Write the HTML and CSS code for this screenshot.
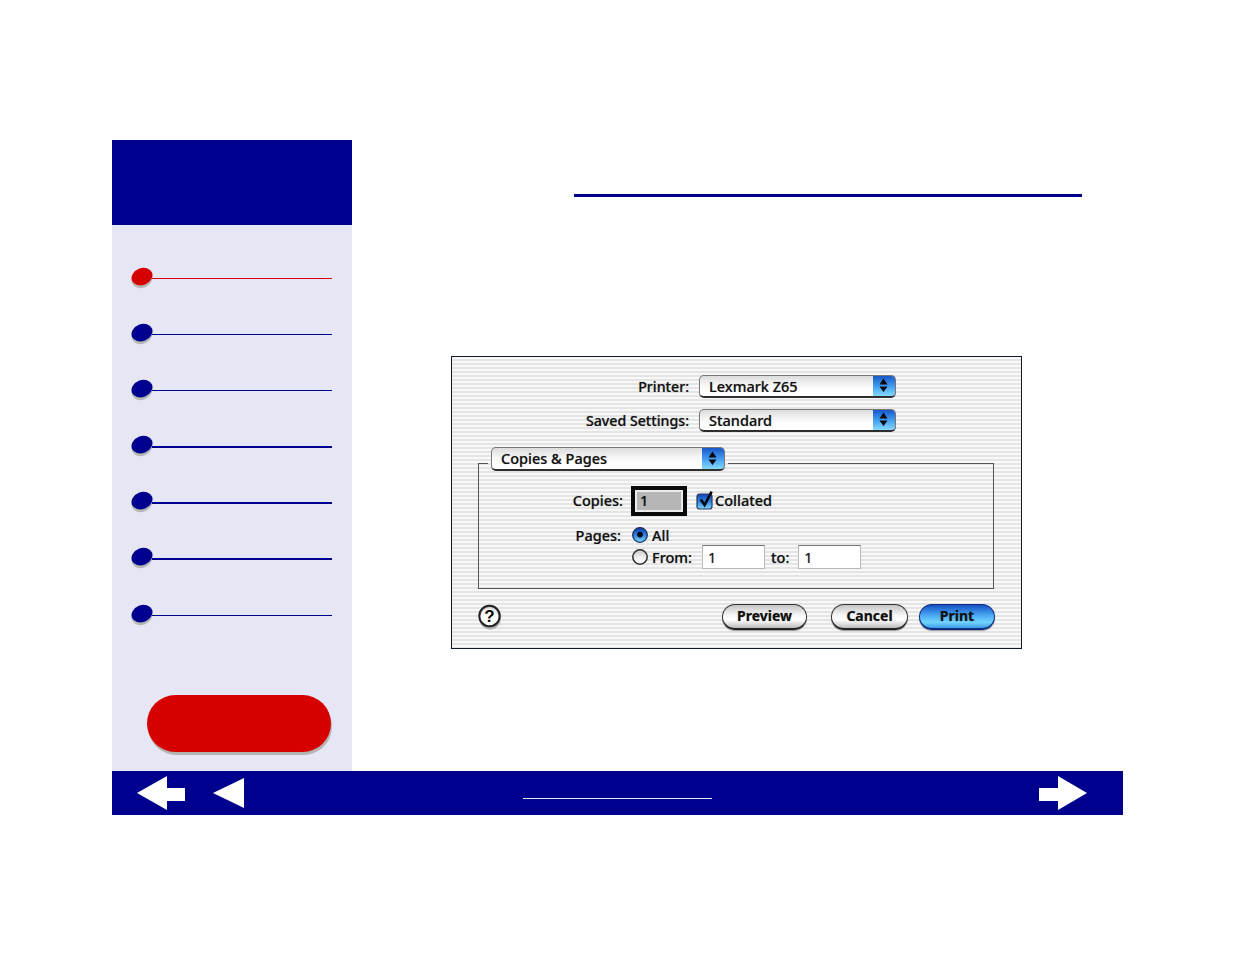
FILE: index.html
```html
<!DOCTYPE html>
<html lang="en">
<head>
<meta charset="utf-8">
<title>Print dialog</title>
<link rel="stylesheet" href="styles.css">
</head>
<body>
<svg class="defs" width="0" height="0" aria-hidden="true">
  <defs>
    <symbol id="bullet" viewBox="0 0 22 24">
      <ellipse cx="11" cy="12.4" rx="10.6" ry="8.4" transform="rotate(-22 11 12.4)" fill="#b8b8b8"/>
      <ellipse cx="11" cy="9.6" rx="10.8" ry="8.4" transform="rotate(-22 11 9.6)" fill="currentColor"/>
    </symbol>
    <symbol id="updown" viewBox="0 0 23 23">
      <path d="M11.5 4.5 15.5 10.5H7.5zM11.5 18 15.5 12.5H7.5z" fill="#06060e"/>
    </symbol>
  </defs>
</svg>
<div class="page">
  <div class="main">
    <aside class="sidebar">
      <div class="side-head"></div>
      <nav class="nav">
        <div class="nav-item nav-red"><svg class="bullet"><use href="#bullet"/></svg><span class="nav-line"></span></div>
        <div class="nav-item"><svg class="bullet"><use href="#bullet"/></svg><span class="nav-line"></span></div>
        <div class="nav-item"><svg class="bullet"><use href="#bullet"/></svg><span class="nav-line"></span></div>
        <div class="nav-item"><svg class="bullet"><use href="#bullet"/></svg><span class="nav-line thick"></span></div>
        <div class="nav-item"><svg class="bullet"><use href="#bullet"/></svg><span class="nav-line thick"></span></div>
        <div class="nav-item"><svg class="bullet"><use href="#bullet"/></svg><span class="nav-line thick"></span></div>
        <div class="nav-item nav-last"><svg class="bullet"><use href="#bullet"/></svg><span class="nav-line"></span></div>
      </nav>
      <div class="pill"></div>
    </aside>
    <section class="content">
      <div class="title-rule"></div>
      <div class="dialog">
        <div class="form-row">
          <span class="label">Printer:</span>
          <div class="popup popup-wide"><span class="popup-text">Lexmark Z65</span><span class="cap"><svg class="updown"><use href="#updown"/></svg></span></div>
        </div>
        <div class="form-row">
          <span class="label">Saved Settings:</span>
          <div class="popup popup-wide"><span class="popup-text">Standard</span><span class="cap"><svg class="updown"><use href="#updown"/></svg></span></div>
        </div>
        <fieldset class="group">
          <legend class="group-legend">
            <div class="popup popup-group"><span class="popup-text">Copies &amp; Pages</span><span class="cap"><svg class="updown"><use href="#updown"/></svg></span></div>
          </legend>
          <div class="copies-row">
            <span class="group-label copies-label">Copies:</span>
            <div class="copies-field"><span class="copies-value">1</span></div>
            <svg class="check" viewBox="0 0 18 20"><defs><linearGradient id="cg" x1="0" y1="0" x2="0" y2="1"><stop offset="0" stop-color="#1246b4"/><stop offset=".5" stop-color="#2f80e0"/><stop offset="1" stop-color="#7cd6fc"/></linearGradient></defs><rect x="1" y="4" width="15" height="15" rx="2.5" fill="url(#cg)" stroke="#28365c" stroke-width="1.2"/><path d="M4.8 9.6 8.6 15 15.6 1.6" fill="none" stroke="#06060e" stroke-width="2.6"/></svg>
            <span class="text collated">Collated</span>
          </div>
          <div class="pages-block">
            <span class="group-label pages-label">Pages:</span>
            <div class="pages-options">
              <div class="option option-all">
                <svg class="radio" viewBox="0 0 16 16"><defs><linearGradient id="rg" x1="0" y1="0" x2="0" y2="1"><stop offset="0" stop-color="#0c3ca8"/><stop offset=".5" stop-color="#2c80e4"/><stop offset="1" stop-color="#84dcfe"/></linearGradient></defs><circle cx="8" cy="8" r="7.3" fill="url(#rg)" stroke="#1c2c58" stroke-width="1.3"/><circle cx="8" cy="7.6" r="2.8" fill="#06060e"/></svg>
                <span class="text">All</span>
              </div>
              <div class="option">
                <svg class="radio" viewBox="0 0 16 16"><defs><linearGradient id="rw" x1="0" y1="0" x2="0" y2="1"><stop offset="0" stop-color="#c8c8c8"/><stop offset=".6" stop-color="#f4f4f4"/><stop offset="1" stop-color="#ffffff"/></linearGradient></defs><circle cx="8" cy="8" r="7.2" fill="url(#rw)" stroke="#2c2c2c" stroke-width="1.5"/></svg>
                <span class="text from-label">From:</span>
                <div class="num-field">1</div>
                <span class="text to-label">to:</span>
                <div class="num-field">1</div>
              </div>
            </div>
          </div>
        </fieldset>
        <div class="dialog-actions">
          <svg class="help" viewBox="0 0 24 26"><defs><radialGradient id="hg" cx=".5" cy=".6" r=".6"><stop offset="0" stop-color="#fff"/><stop offset=".65" stop-color="#fafafa"/><stop offset="1" stop-color="#bbb"/></radialGradient></defs><ellipse cx="12" cy="14" rx="11" ry="11.4" fill="#aaa"/><circle cx="11.5" cy="12" r="10.2" fill="url(#hg)" stroke="#222" stroke-width="2"/><text x="11.5" y="18" text-anchor="middle" class="help-mark">?</text></svg>
          <div class="btn btn-preview">Preview</div>
          <div class="btn btn-cancel">Cancel</div>
          <div class="btn btn-print">Print</div>
        </div>
      </div>
    </section>
  </div>
  <footer class="footer">
    <svg class="arrow-back" viewBox="0 0 48 34"><path d="M0 17 30 0V12H48V25H30V34z" fill="#fff"/></svg>
    <svg class="arrow-prev" viewBox="0 0 31 30"><path d="M0 15 31 0V30z" fill="#fff"/></svg>
    <span class="foot-link"></span>
    <svg class="arrow-next" viewBox="0 0 48 34"><path d="M48 17 19 0V12H0V25H19V34z" fill="#fff"/></svg>
  </footer>
</div>
</body>
</html>
```
FILE: styles.css
```css
* { box-sizing: border-box; }
html, body { margin: 0; padding: 0; background: #fff; }
body { font-family: "Noto Sans", "Open Sans", sans-serif; color: #111; }
.defs { display: block; height: 0; }
.page { width: 1123px; height: 954px; padding: 140px 0 0 112px; }
.main { display: flex; height: 631px; }

.sidebar { width: 240px; background: #e6e6f4; display: flex; flex-direction: column; }
.side-head { height: 85px; background: #00008e; }
.nav { padding: 42px 0 0 19px; display: flex; flex-direction: column; }
.nav-item { height: 56px; display: flex; align-items: flex-start; color: #00008e; }
.nav-red { color: #d70000; }
.nav-last { margin-top: 1px; }
.bullet { width: 22px; height: 24px; flex: none; }
.nav-line { width: 180px; height: 1px; margin: 11px 0 0 -1px; background: currentColor; }
.nav-line.thick { height: 2px; }
.pill { width: 184px; height: 57px; margin: 35px 0 0 35px; border-radius: 29px; background: #d70000; box-shadow: 1px 3px 0 #b4b4b4; }

.content { flex: 1; }
.title-rule { width: 508px; height: 3px; margin: 54px 0 0 222px; background: #00008e; }
.dialog { width: 571px; height: 293px; margin: 159px 0 0 99px; padding: 18px 26px 0; border: 1px solid #10182c;
  background: repeating-linear-gradient(#f8f8f8 0 2px, #e4e4e4 2px 4px); }

.label, .group-label, .text, .popup-text, .btn, .num-field, .copies-value { font-size: 14.5px; font-weight: 500; line-height: 20px; white-space: nowrap; text-shadow: 0 0 1px rgba(0, 0, 0, .45); }

.form-row { display: flex; align-items: center; height: 23px; margin-bottom: 11px; }
.label { width: 211px; text-align: right; margin-right: 10px; font-size: 14.2px; }
.popup { display: flex; align-items: stretch; height: 23px; border: 1px solid #777; border-bottom: 2px solid #2e2e2e; border-radius: 5px; overflow: hidden;
  background: linear-gradient(#dcdcdc, #f6f6f6 45%, #fff 70%); }
.popup-wide { width: 197px; }
.popup-group { width: 234px; height: 24px; }
.popup-text { flex: 1; padding-left: 9px; }
.cap { width: 23px; margin: -1px -1px -2px 0; padding-right: 1px; background: linear-gradient(#1450c4, #3f98ee 50%, #84dafe); border-radius: 0 5px 5px 0; border-right: 1px solid #123a90; border-bottom: 2px solid #123a70; display: flex; align-items: center; justify-content: center; }
.updown { width: 23px; height: 23px; flex: none; }

.group { width: 516px; height: 142px; margin: 15px 0 0; padding: 0; min-width: 0; border: 1px solid #555; display: block; }
.group-legend { padding: 0 3px 8px; margin: 0 0 0 9px; }

.copies-row { display: flex; align-items: center; height: 30px; margin-top: 7px; }
.group-label { width: 144px; text-align: right; flex: none; }
.copies-label, .collated { padding-bottom: 2px; }
.copies-field { width: 56px; height: 30px; margin-left: 8px; border: 4px solid #0a0a0a; background: #b6b6b6; box-shadow: inset 0 0 0 2px #ececec; padding: 0 0 2px 5px; display: flex; align-items: center; }
.check { width: 18px; height: 20px; margin: -3px 1px 0 9px; flex: none; }

.pages-block { display: flex; margin-top: 9px; }
.pages-label { width: 142px; }
.pages-options { margin-left: 11px; }
.option { display: flex; align-items: center; height: 24px; }
.option-all { height: 20px; }
.radio { width: 16px; height: 16px; flex: none; margin-right: 4px; }
.from-label { width: 50px; }
.to-label { margin: 0 9px 0 6px; }
.num-field { width: 63px; height: 24px; padding-left: 5px; background: #fff; border: 1px solid #b8b8b8; border-top-color: #777; line-height: 22px; font-weight: 400; }

.dialog-actions { display: flex; align-items: flex-start; margin-top: 15px; }
.help { width: 24px; height: 26px; flex: none; }
.help-mark { font: 700 17px "Liberation Sans", sans-serif; fill: #0a0a0a; }
.btn { height: 26px; border-radius: 13px; border: 1.5px solid #333; border-bottom: 2px solid #222; text-align: center; line-height: 22px; font-weight: 700; font-size: 14px;
  background: linear-gradient(#c4c4c4, #f8f8f8 45%, #fff 65%, #bcbcbc); box-shadow: 0 1px 1px #9a9a9a; }
.btn-preview { width: 85px; margin-left: 220px; }
.btn-cancel { width: 77px; margin-left: 24px; }
.btn-print { width: 76px; margin-left: 11px; border-color: #0c2c80; background: linear-gradient(#1450c4, #4aa8f4 45%, #70d4fe 75%, #3f9ae8); }

.footer { width: 1011px; height: 44px; background: #00008e; display: flex; align-items: flex-start; }
.arrow-back { width: 48px; height: 34px; margin: 5px 0 0 25px; flex: none; }
.arrow-prev { width: 31px; height: 30px; margin: 7px 0 0 28px; flex: none; }
.foot-link { width: 189px; height: 1px; margin: 27px 0 0 279px; background: #e8e8ff; flex: none; }
.arrow-next { width: 48px; height: 34px; margin: 5px 0 0 327px; flex: none; }
```
